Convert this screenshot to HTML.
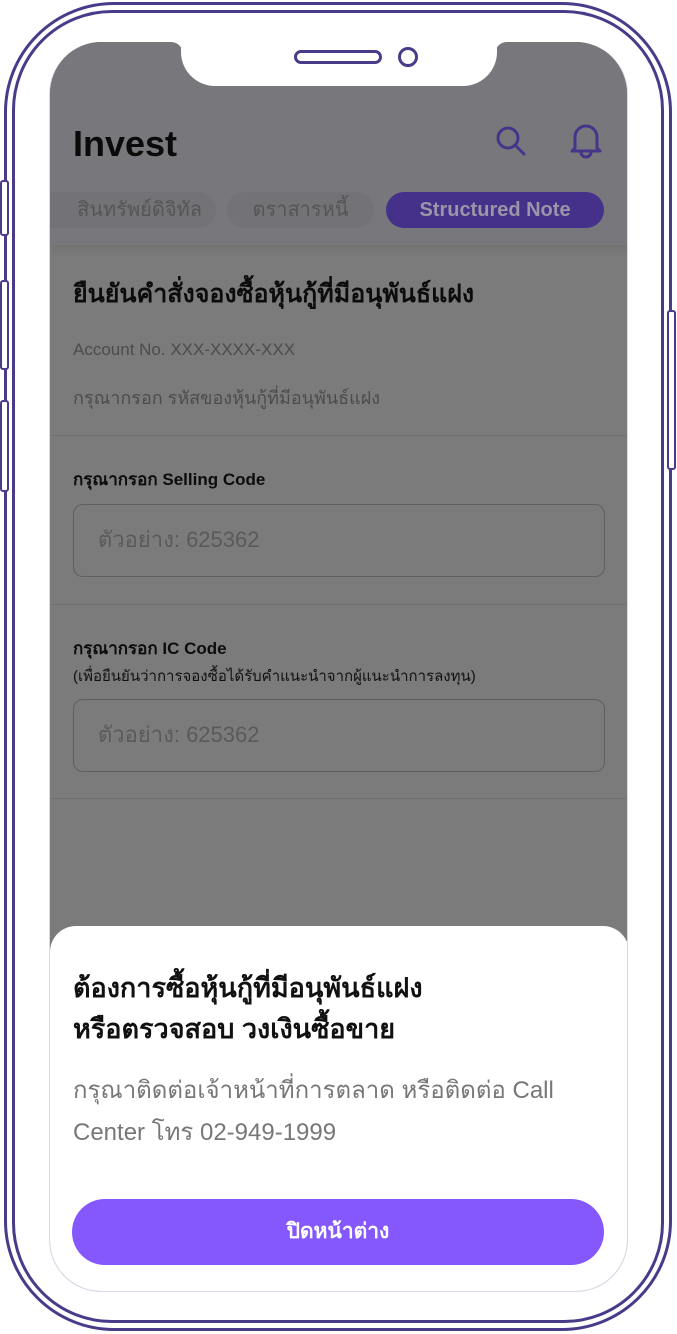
<!DOCTYPE html>
<html><head><meta charset="utf-8"><style>
*{margin:0;padding:0;box-sizing:border-box}
body{width:677px;height:1334px;background:#fff;position:relative;overflow:hidden;font-family:"Liberation Sans","DejaVu Sans","Noto Sans CJK SC",sans-serif}
.abs{position:absolute}
.frame1{left:4px;top:2px;width:668px;height:1329px;border:3px solid #4a3a8a;border-radius:110px}
.frame2{left:12px;top:10px;width:652px;height:1313px;border:3px solid #4a3a8a;border-radius:100px}
.btn{background:#fff;border:2px solid #4a3a8a;border-radius:3px}
.screen{left:49px;top:42px;width:579px;height:1250px;border-radius:52px;overflow:hidden;background:#7b7b7b;border:1px solid #dcd8ea;border-top:none}
.header{left:0;top:0;width:579px;height:203px;background:#78777c;box-shadow:0 4px 8px rgba(0,0,0,.08)}
.notch{left:131px;top:0;width:316px;height:44px;background:#fff;border-radius:0 0 34px 34px}
.t{position:absolute;white-space:nowrap}
.pill{position:absolute;top:150px;height:36px;border-radius:18px;background:#737276;color:#555;font-size:20px;line-height:36px;text-align:center}
.line{position:absolute;left:0;width:579px;height:1px;background:#6f6f6f}
.inp{position:absolute;left:23px;width:532px;height:73px;border:1.5px solid #5f5f5f;border-radius:10px;color:#5a5a5a;font-size:22px;line-height:70px;padding-left:24px}
.sheet{left:0;top:884px;width:579px;height:366px;background:#fff;border-radius:26px 26px 0 0}
</style></head><body>
<div class="abs frame1"></div>
<div class="abs frame2"></div>
<div class="abs btn" style="left:0;top:180px;width:9px;height:56px"></div>
<div class="abs btn" style="left:0;top:280px;width:9px;height:90px"></div>
<div class="abs btn" style="left:0;top:400px;width:9px;height:92px"></div>
<div class="abs btn" style="left:667px;top:310px;width:9px;height:160px"></div>
<div class="abs screen">
  <div class="abs header"></div>
  <div class="abs notch"></div>
  <svg class="abs" style="left:121px;top:0" width="12" height="12"><path d="M0 0 H12 V12 A12 12 0 0 0 0 0Z" fill="#fff"/></svg>
  <svg class="abs" style="left:445px;top:0" width="12" height="12"><path d="M12 0 H0 V12 A12 12 0 0 1 12 0Z" fill="#fff"/></svg>
  <div class="t" style="left:23px;top:81px;font-size:36px;font-weight:bold;color:#0a0a0a">Invest</div>
  <svg class="abs" style="left:444px;top:82px" width="34" height="34" viewBox="0 0 34 34"><circle cx="14" cy="14" r="10" fill="none" stroke="#45348a" stroke-width="3"/><line x1="21" y1="21" x2="30" y2="30" stroke="#45348a" stroke-width="3" stroke-linecap="round"/></svg>
  <svg class="abs" style="left:519px;top:80px" width="34" height="38" viewBox="0 0 34 38"><path d="M6 26 V15 a11 11 0 0 1 22 0 V26 L31 29 H3 Z" fill="none" stroke="#45348a" stroke-width="3" stroke-linejoin="round"/><path d="M12 30 a5 5 0 0 0 10 0" fill="none" stroke="#45348a" stroke-width="3"/></svg>
  <div class="pill" style="left:-30px;width:196px;text-align:right;padding-right:14px">สินทรัพย์ดิจิทัล</div>
  <div class="pill" style="left:177px;width:147px">ตราสารหนี้</div>
  <div class="pill" style="left:336px;width:218px;background:#45308a;color:#9a95a8;font-weight:bold">Structured Note</div>
  <div class="t" style="left:23px;top:232px;font-size:25px;font-weight:bold;color:#0c0c0c">ยืนยันคำสั่งจองซื้อหุ้นกู้ที่มีอนุพันธ์แฝง</div>
  <div class="t" style="left:23px;top:298px;font-size:17px;color:#4c4c4c">Account No. XXX-XXXX-XXX</div>
  <div class="t" style="left:23px;top:341px;font-size:18px;color:#4c4c4c">กรุณากรอก รหัสของหุ้นกู้ที่มีอนุพันธ์แฝง</div>
  <div class="line" style="top:393px"></div>
  <div class="t" style="left:23px;top:424px;font-size:17px;font-weight:bold;color:#0c0c0c">กรุณากรอก Selling Code</div>
  <div class="inp" style="top:462px">ตัวอย่าง: 625362</div>
  <div class="line" style="top:562px"></div>
  <div class="t" style="left:23px;top:593px;font-size:17px;font-weight:bold;color:#0c0c0c">กรุณากรอก IC Code</div>
  <div class="t" style="left:23px;top:622px;font-size:15px;color:#111">(เพื่อยืนยันว่าการจองซื้อได้รับคำแนะนำจากผู้แนะนำการลงทุน)</div>
  <div class="inp" style="top:657px">ตัวอย่าง: 625362</div>
  <div class="line" style="top:756px"></div>
  <div class="abs sheet">
    <div class="t" style="left:23px;top:42px;font-size:27px;font-weight:bold;color:#111;line-height:41px">ต้องการซื้อหุ้นกู้ที่มีอนุพันธ์แฝง<br>หรือตรวจสอบ วงเงินซื้อขาย</div>
    <div class="t" style="left:23px;top:144px;font-size:24px;color:#777;line-height:42px">กรุณาติดต่อเจ้าหน้าที่การตลาด หรือติดต่อ Call<br>Center โทร 02-949-1999</div>
    <div class="abs" style="left:22px;top:273px;width:532px;height:66px;border-radius:33px;background:#8458fd;color:#fff;font-size:21px;font-weight:bold;text-align:center;line-height:66px">ปิดหน้าต่าง</div>
  </div>
</div>
<div class="abs" style="left:294px;top:50px;width:88px;height:14px;border:3px solid #4a3a8a;border-radius:8px"></div>
<div class="abs" style="left:398px;top:47px;width:20px;height:20px;border:3px solid #4a3a8a;border-radius:50%"></div>
</body></html>
